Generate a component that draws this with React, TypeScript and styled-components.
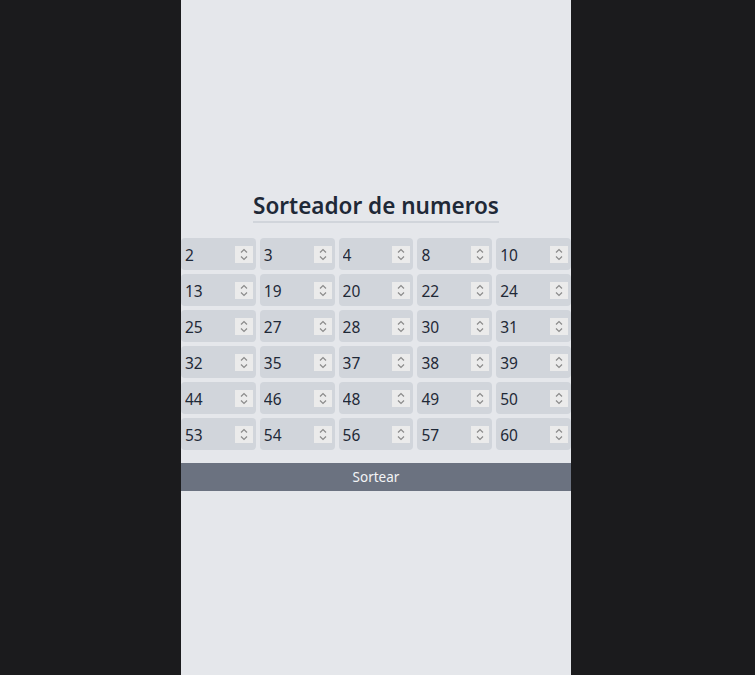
import styled, { createGlobalStyle } from "styled-components";
import { useState } from "react";

const GlobalStyle = createGlobalStyle`
    html, body {
        margin: 0;
        padding: 0;
        background: #1b1b1d;
        font-family: "Noto Sans", "Open Sans", sans-serif;
    }
`;

const SdivPage = styled.div`
    display: flex;
    justify-content: center;
    min-height: 100vh;
    padding-right: 3px;
    box-sizing: border-box;
    background: #1b1b1d;
`;
const SdivPanel = styled.div`
    width: 390px;
    min-height: 100vh;
    background: #e5e7eb;
    display: flex;
    flex-direction: column;
    align-items: center;
    justify-content: center;
    padding-top: 4px;
    box-sizing: border-box;
`;
const STitle = styled.h1`
    margin: 0 0 15px 0;
    padding-top: 2px;
    font-size: 22.5px;
    font-weight: 600;
    line-height: 31px;
    color: #1f2937;
    border-bottom: 2px solid #d1d5db;
`;
const SdivGrid = styled.div`
    width: 100%;
    display: grid;
    grid-template-columns: repeat(5, minmax(0, 1fr));
    gap: 4px;
`;
const SdivCell = styled.div`
    display: flex;
    align-items: center;
    height: 32px;
    padding: 0 3px 0 4px;
    background: #d1d5db;
    border-radius: 4px;
    box-sizing: border-box;
`;
const SInput = styled.input`
    flex: 1;
    width: 0;
    min-width: 0;
    border: none;
    outline: none;
    background: transparent;
    padding: 2px 0 0 0;
    font-family: inherit;
    font-size: 15.5px;
    color: #1f2937;
`;
const SdivSpin = styled.div`
    flex: none;
    width: 18px;
    height: 17px;
    background: #ebebeb;
    display: flex;
    align-items: center;
    justify-content: center;
`;
const SButton = styled.button`
    width: 100%;
    height: 28px;
    margin-top: 13px;
    border: none;
    background: #6b7280;
    color: #f3f4f6;
    font-family: inherit;
    font-size: 13.5px;
    cursor: pointer;
`;

const initial = [
    2, 3, 4, 8, 10,
    13, 19, 20, 22, 24,
    25, 27, 28, 30, 31,
    32, 35, 37, 38, 39,
    44, 46, 48, 49, 50,
    53, 54, 56, 57, 60,
];

const Spinner = () => (
    <SdivSpin>
        <svg width="18" height="17" viewBox="0 0 18 17">
            <path d="M6 6.5 L9 3.5 L12 6.5" fill="none" stroke="#8b8b8b" strokeWidth="1.2" />
            <path d="M6 10.5 L9 13.5 L12 10.5" fill="none" stroke="#8b8b8b" strokeWidth="1.2" />
        </svg>
    </SdivSpin>
);

const App = () => {
    const [numbers, setNumbers] = useState<number[]>(initial);

    /**
     * 番号の抽選
     */
    const sortear = () => {
        const pool = Array.from({ length: 60 }, (_, i) => i + 1);
        for (let i = pool.length - 1; i > 0; i--) {
            const j = Math.floor(Math.random() * (i + 1));
            [pool[i], pool[j]] = [pool[j], pool[i]];
        }
        setNumbers(pool.slice(0, 30).sort((a, b) => a - b));
    };

    return (
        <SdivPage>
            <GlobalStyle />
            <SdivPanel>
                <STitle>Sorteador de numeros</STitle>
                <SdivGrid>
                    {numbers.map((n, index) => (
                        <SdivCell key={index}>
                            <SInput
                                type="text"
                                value={n}
                                onChange={(e) => {
                                    const next = [...numbers];
                                    next[index] = Number(e.target.value) || 0;
                                    setNumbers(next);
                                }}
                            />
                            <Spinner />
                        </SdivCell>
                    ))}
                </SdivGrid>
                <SButton onClick={sortear}>Sortear</SButton>
            </SdivPanel>
        </SdivPage>
    );
};

export default App;
